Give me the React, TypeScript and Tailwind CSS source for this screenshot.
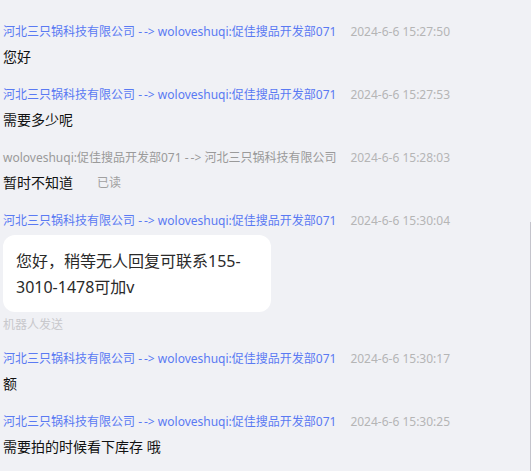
import React from 'react';

type Msg = {
  from: string;
  to: string;
  time: string;
  text: string;
  self?: boolean;
  read?: boolean;
  card?: boolean;
};

const SHOP = '河北三只锅科技有限公司';
const AGENT = 'woloveshuqi:促佳搜品开发部071';

const messages: Msg[] = [
  { from: SHOP, to: AGENT, time: '2024-6-6 15:27:50', text: '您好' },
  { from: SHOP, to: AGENT, time: '2024-6-6 15:27:53', text: '需要多少呢' },
  { from: AGENT, to: SHOP, time: '2024-6-6 15:28:03', text: '暂时不知道', self: true, read: true },
  { from: SHOP, to: AGENT, time: '2024-6-6 15:30:04', text: '您好，稍等无人回复可联系155-3010-1478可加v', card: true },
  { from: SHOP, to: AGENT, time: '2024-6-6 15:30:17', text: '额' },
  { from: SHOP, to: AGENT, time: '2024-6-6 15:30:25', text: '需要拍的时候看下库存 哦' },
];

export default function App() {
  return (
    <div
      className="w-[531px] h-[471px] overflow-hidden bg-[#f0f1f5] flex"
      style={{ fontFamily: '"Noto Sans", "Noto Sans CJK SC", sans-serif' }}
    >
      <div className="flex-1 flex flex-col pt-[22px] pl-[3px]">
        {messages.map((m, i) => (
          <div key={i} className="flex flex-col mb-[17px]">
            {/* Header */}
            <div className="flex items-center h-5 text-xs leading-5 whitespace-nowrap">
              <span className={m.self ? 'text-[#9a9a9a]' : 'text-[#5a7af3]'}>
                {m.from} -&#8239;-&gt; {m.to}
              </span>
              <span className="ml-[14px] text-[#b5b5b5]">{m.time}</span>
            </div>

            {m.card ? (
              <>
                <div className="mt-1 w-[268px] rounded-xl bg-white pl-[13px] pr-3 pt-[13px] pb-[12px] text-base leading-[26px] text-[#2a2a2a]">
                  您好，稍等无人回复可联系155-
                  <br />
                  3010-1478可加v
                </div>
                <div className="mt-[5px] -mb-[1px] text-xs leading-4 text-[#c8c8cc]">机器人发送</div>
              </>
            ) : (
              <div className="mt-[5px] mb-px flex items-center h-5 text-sm leading-5 text-[#111]">
                <span>{m.text}</span>
                {m.read && <span className="ml-6 text-xs text-[#a0a0a0]">已读</span>}
              </div>
            )}
          </div>
        ))}
      </div>
      <div className="w-px mt-[222px] bg-[#c4c4cc]" />
    </div>
  );
}
